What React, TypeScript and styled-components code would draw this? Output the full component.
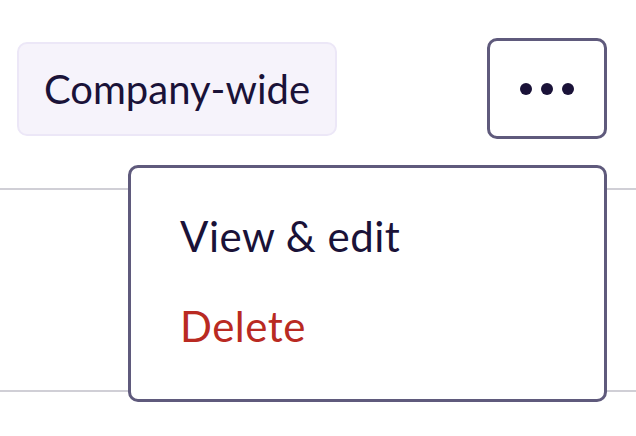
import React from "react";
import styled, { createGlobalStyle } from "styled-components";

const GlobalStyle = createGlobalStyle`
  html, body {
    margin: 0;
    padding: 0;
    background: #ffffff;
  }
  body {
    font-family: Lato, "Liberation Sans", sans-serif;
    color: #1a1238;
  }
`;

export default function App() {
  return (
    <Page>
      <GlobalStyle />
      <Header>
        <Badge>Company-wide</Badge>
        <MenuArea>
          <MoreButton aria-label="More actions">
            <Dot />
            <Dot />
            <Dot />
          </MoreButton>
          <Menu>
            <MenuItem>View &amp; edit</MenuItem>
            <MenuItem $danger>Delete</MenuItem>
          </Menu>
        </MenuArea>
      </Header>
      <Divider />
      <RowBody />
      <Divider />
    </Page>
  );
}

const Page = styled.div`
  width: 636px;
  height: 436px;
  overflow: hidden;
  padding-top: 38px;
  box-sizing: border-box;
`;

const Header = styled.div`
  display: flex;
  align-items: flex-start;
  justify-content: space-between;
  padding: 0 29px 0 17px;
  height: 150px;
`;

const Badge = styled.span`
  margin-top: 4px;
  display: inline-flex;
  align-items: center;
  justify-content: center;
  width: 320px;
  height: 94px;
  box-sizing: border-box;
  background: #f6f3fb;
  border: 2px solid #ece7f7;
  border-radius: 10px;
  font-size: 40px;
  color: #1a1238;
`;

const MenuArea = styled.div`
  position: relative;
`;

const MoreButton = styled.button`
  width: 120px;
  height: 101px;
  box-sizing: border-box;
  display: flex;
  align-items: center;
  justify-content: center;
  gap: 9px;
  background: #ffffff;
  border: 3px solid #5f5a7c;
  border-radius: 10px;
  padding: 0;
`;

const Dot = styled.span`
  width: 12px;
  height: 12px;
  border-radius: 50%;
  background: #1a1238;
`;

const Menu = styled.div`
  position: absolute;
  top: 127px;
  right: 0;
  width: 479px;
  height: 237px;
  box-sizing: border-box;
  background: #ffffff;
  border: 3px solid #5f5a7c;
  border-radius: 10px;
  padding: 43px 0 0 49px;
  display: flex;
  flex-direction: column;
  gap: 40px;
  z-index: 2;
`;

const MenuItem = styled.div<{ $danger?: boolean }>`
  font-size: 42px;
  line-height: 50px;
  letter-spacing: 0.5px;
  color: ${({ $danger }) => ($danger ? "#b92a22" : "#1a1238")};
`;

const Divider = styled.div`
  height: 2px;
  background: #d0cfd6;
`;

const RowBody = styled.div`
  height: 200px;
`;
